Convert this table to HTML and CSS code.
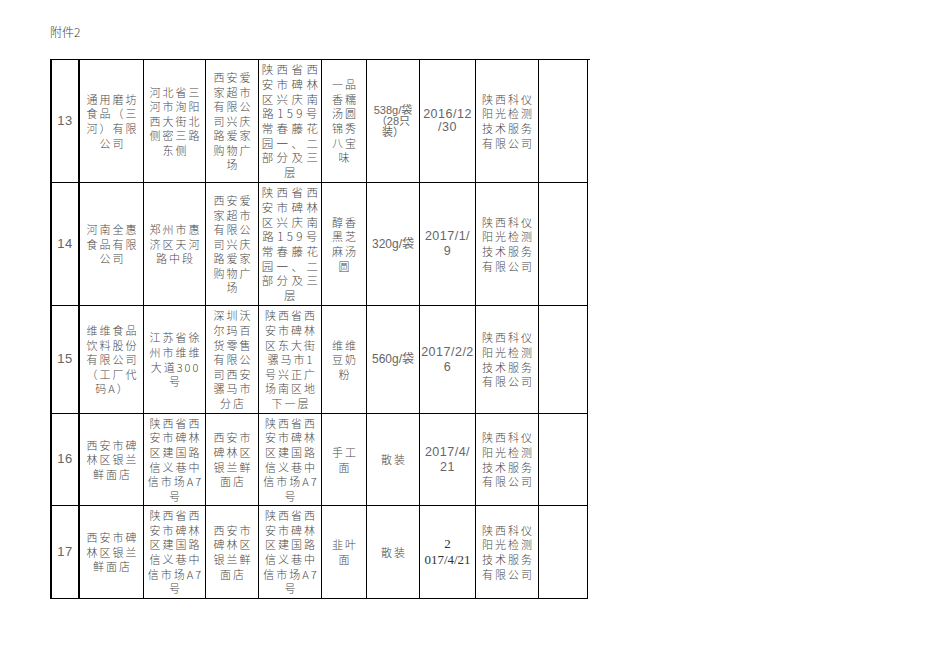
FILE: index.html
```html
<!DOCTYPE html>
<html lang="zh-CN">
<head>
<meta charset="utf-8">
<title>附件2</title>
<link rel="stylesheet" href="styles.css">
</head>
<body>
<div class="page">
  <div class="caption">附件2</div>
  <div class="sheet">
    <!-- row 13 -->
    <div class="c num">13</div>
    <div class="c">通用磨坊<br>食品（三<br>河）有限<br>公司</div>
    <div class="c">河北省三<br>河市洵阳<br>西大街北<br>侧密三路<br>东侧</div>
    <div class="c">西安爱<br>家超市<br>有限公<br>司兴庆<br>路爱家<br>购物广<br>场</div>
    <div class="c big">陕西省西<br>安市碑林<br>区兴庆南<br>路159号<br>常春藤花<br>园一、二<br>部分及三<br>层</div>
    <div class="c">一品<br>香糯<br>汤圆<br>锦秀<br>八宝<br>味</div>
    <div class="c lat tight">538g/袋<br>（28只<br>装）</div>
    <div class="c date mid">2016/12<br>/30</div>
    <div class="c">陕西科仪<br>阳光检测<br>技术服务<br>有限公司</div>
    <div class="c"></div>

    <!-- row 14 -->
    <div class="c num">14</div>
    <div class="c">河南全惠<br>食品有限<br>公司</div>
    <div class="c">郑州市惠<br>济区天河<br>路中段</div>
    <div class="c">西安爱<br>家超市<br>有限公<br>司兴庆<br>路爱家<br>购物广<br>场</div>
    <div class="c big">陕西省西<br>安市碑林<br>区兴庆南<br>路159号<br>常春藤花<br>园一、二<br>部分及三<br>层</div>
    <div class="c">醇香<br>黑芝<br>麻汤<br>圆</div>
    <div class="c lat">320g/袋</div>
    <div class="c date">2017/1/<br>9</div>
    <div class="c">陕西科仪<br>阳光检测<br>技术服务<br>有限公司</div>
    <div class="c"></div>

    <!-- row 15 -->
    <div class="c num">15</div>
    <div class="c">维维食品<br>饮料股份<br>有限公司<br>（工厂代<br>码A）</div>
    <div class="c">江苏省徐<br>州市维维<br>大道300<br>号</div>
    <div class="c">深圳沃<br>尔玛百<br>货零售<br>有限公<br>司西安<br>骡马市<br>分店</div>
    <div class="c">陕西省西<br>安市碑林<br>区东大街<br>骡马市1<br>号兴正广<br>场南区地<br>下一层</div>
    <div class="c">维维<br>豆奶<br>粉</div>
    <div class="c lat">560g/袋</div>
    <div class="c date">2017/2/2<br>6</div>
    <div class="c">陕西科仪<br>阳光检测<br>技术服务<br>有限公司</div>
    <div class="c"></div>

    <!-- row 16 -->
    <div class="c num">16</div>
    <div class="c">西安市碑<br>林区银兰<br>鲜面店</div>
    <div class="c">陕西省西<br>安市碑林<br>区建国路<br>信义巷中<br>信市场A7<br>号</div>
    <div class="c">西安市<br>碑林区<br>银兰鲜<br>面店</div>
    <div class="c">陕西省西<br>安市碑林<br>区建国路<br>信义巷中<br>信市场A7<br>号</div>
    <div class="c">手工<br>面</div>
    <div class="c">散装</div>
    <div class="c date">2017/4/<br>21</div>
    <div class="c">陕西科仪<br>阳光检测<br>技术服务<br>有限公司</div>
    <div class="c"></div>

    <!-- row 17 -->
    <div class="c num">17</div>
    <div class="c">西安市碑<br>林区银兰<br>鲜面店</div>
    <div class="c">陕西省西<br>安市碑林<br>区建国路<br>信义巷中<br>信市场A7<br>号</div>
    <div class="c">西安市<br>碑林区<br>银兰鲜<br>面店</div>
    <div class="c">陕西省西<br>安市碑林<br>区建国路<br>信义巷中<br>信市场A7<br>号</div>
    <div class="c">韭叶<br>面</div>
    <div class="c">散装</div>
    <div class="c serifdate">2<br>017/4/21</div>
    <div class="c">陕西科仪<br>阳光检测<br>技术服务<br>有限公司</div>
    <div class="c"></div>
  </div>
</div>
</body>
</html>
```

FILE: styles.css
```css
html, body {
  margin: 0;
  padding: 0;
  background: #ffffff;
}

body {
  font-family: "Noto Sans CJK SC", "Liberation Sans", sans-serif;
  color: #4a4a4a;
}

.page {
  padding: 24px 0 0 50px;
}

.caption {
  font-size: 12px;
  line-height: 16px;
  height: 16px;
  margin-bottom: 19px;
  font-weight: 300;
  color: #444;
}

.sheet {
  display: grid;
  width: 538px;
  grid-template-columns: 28px 64px 62px 53px 63px 45px 53px 56px 63px 49px;
  grid-template-rows: 123px 123px 108px 92px 93px;
  border-left: 2px solid #000;
  border-top: 1px solid #000;
}

.c {
  box-sizing: border-box;
  border-right: 1px solid #000;
  border-bottom: 1px solid #000;
  display: flex;
  align-items: center;
  justify-content: center;
  text-align: center;
  white-space: nowrap;
  overflow: hidden;
  font-size: 11px;
  font-weight: 300;
  letter-spacing: 2px;
  line-height: 14.6px;
  padding: 0 0 0 2px;
}

.c:nth-child(10n+1) {
  border-right: 2px solid #000;
}

.num {
  font-family: "Liberation Sans", sans-serif;
  font-size: 13px;
  font-weight: 400;
  letter-spacing: 0.5px;
  padding-left: 0;
  color: #666;
}

.big {
  font-size: 11.5px;
  letter-spacing: 3.4px;
  line-height: 14.7px;
  padding-left: 3px;
}

.lat {
  font-family: "Liberation Sans", "Noto Sans CJK SC", sans-serif;
  font-weight: 400;
  letter-spacing: 0;
  font-size: 12px;
  padding-left: 0;
  color: #666;
}

.tight {
  font-size: 11px;
  line-height: 11px;
}

.date {
  font-family: "Liberation Sans", sans-serif;
  font-weight: 400;
  font-size: 12.5px;
  letter-spacing: 0.5px;
  padding-left: 0;
  color: #666;
}

.mid {
  line-height: 13px;
}

.serifdate {
  font-family: "Liberation Serif", serif;
  font-weight: 400;
  font-size: 13px;
  letter-spacing: 0;
  line-height: 16px;
  padding-left: 0;
  color: #333;
}
```
